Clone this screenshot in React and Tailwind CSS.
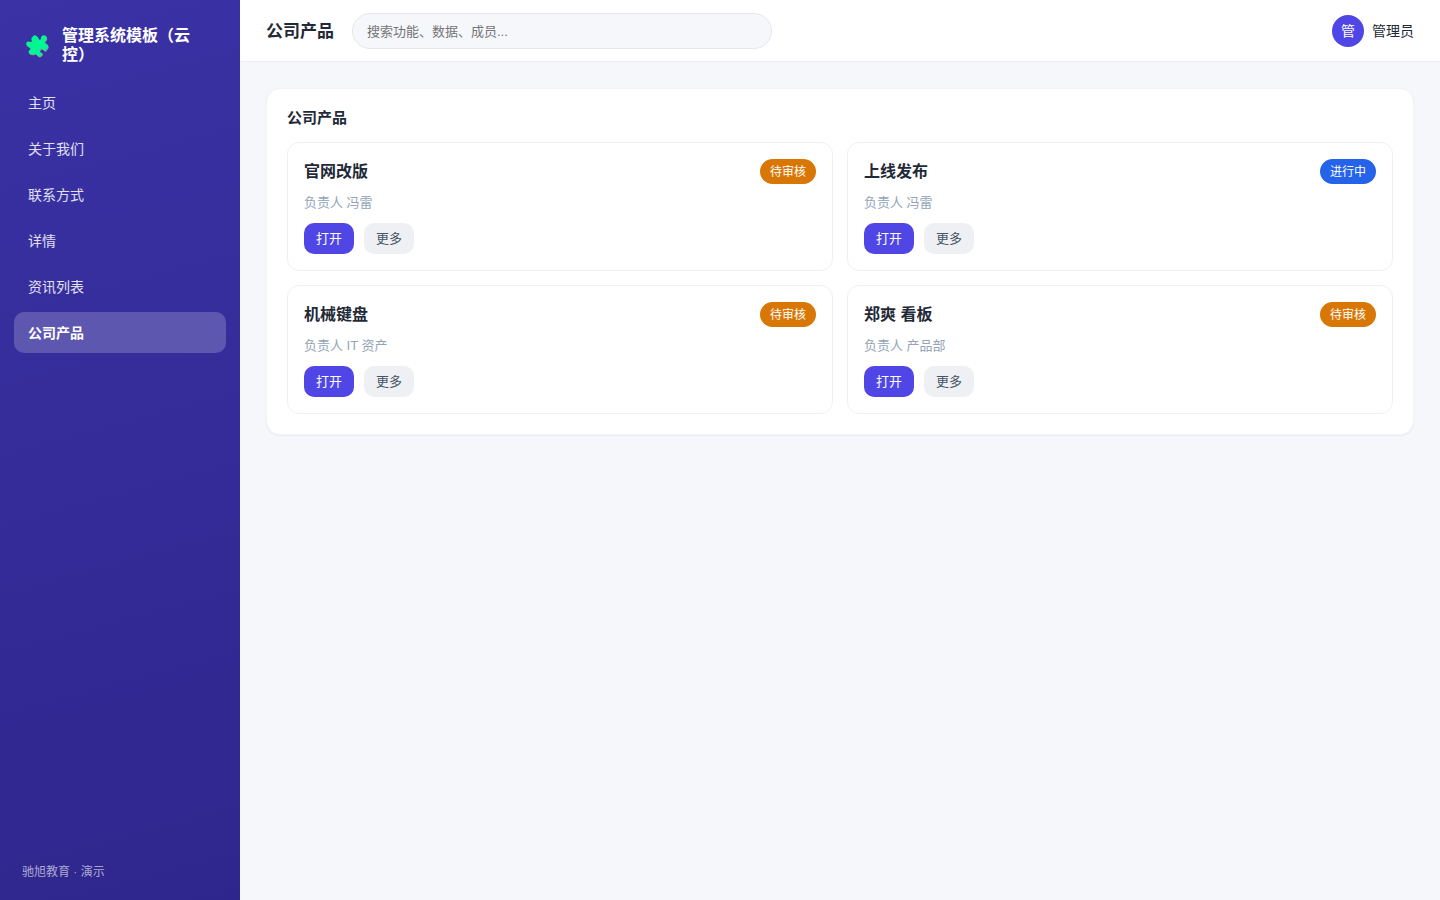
import React from 'react';

const navItems = ['主页', '关于我们', '联系方式', '详情', '资讯列表', '公司产品'];

const products = [
  { name: '官网改版', owner: '负责人 冯雷', status: '待审核' },
  { name: '上线发布', owner: '负责人 冯雷', status: '进行中' },
  { name: '机械键盘', owner: '负责人 IT 资产', status: '待审核' },
  { name: '郑爽 看板', owner: '负责人 产品部', status: '待审核' },
];

const PuzzleShape = ({ fill }) => (
  <path
    fill={fill}
    d="M6.8 3.4Q8.6 1.2 10.6 3L11.8 4.4C12.4 5.2 12.2 6 13 6.6C13.8 7 14.8 6.6 15 5.8C14.6 3.6 16 2.2 17.8 2.2C20 2.2 21.2 4.2 20.4 6.2C20 7.4 18.6 8 18.6 9C18.6 9.8 19.2 10.2 20 10.6L21.4 11.6Q23 13.2 21.6 15L19.4 17.6C18.4 18.6 18 17.6 17.4 16.8C16.4 15.4 14.4 15.6 13.8 17C13.2 18.6 14.2 19.6 15.4 19.8C16.4 20.2 16.6 20.8 16 21.6L14.6 23Q13.2 24.4 11.8 23L9.8 21C8.8 20.2 8.2 21 7.2 21.4L4.8 21.2Q2 20.4 2.8 18L4 16.6C4.8 15.4 4.4 14.6 3.4 14.2C2.4 13.8 1.4 13.4.6 12.2C-.4 10.6 .4 8.8 2 8.6C3.4 8.4 4.4 9.6 5.4 8.8C6.2 8 5.8 7.2 5.4 6.4C5 5.2 6 4.2 6.8 3.4Z"
  />
);

const Logo = () => (
  <svg className="w-6 h-6 shrink-0 overflow-visible" viewBox="0 0 24 24" aria-hidden="true">
    <g transform="translate(0.6 0.8)">
      <PuzzleShape fill="#9a93a0" />
    </g>
    <PuzzleShape fill="#00f593" />
  </svg>
);

const Badge = ({ status }) => {
  const colors = {
    待审核: 'bg-[#d97706]',
    进行中: 'bg-[#2563eb]',
  };
  return (
    <span className={`rounded-full px-2.5 pt-0.5 text-xs leading-[23px] text-white ${colors[status] || 'bg-gray-500'}`}>
      {status}
    </span>
  );
};

const Sidebar = () => (
  <aside className="flex w-60 shrink-0 flex-col bg-linear-165 from-[#3a32a5] to-[#2f268d] px-3.5 pt-[26px] pb-[19px] text-white">
    <div className="flex items-center gap-3 pr-3.5 pl-3">
      <Logo />
      <span className="text-base leading-[19px] font-bold">管理系统模板（云控）</span>
    </div>
    <nav className="mt-[18px] flex flex-col gap-[5px]">
      {navItems.map((item) => (
        <a
          key={item}
          href="#"
          className={`rounded-[10px] px-3.5 pt-[11px] pb-[9px] text-sm leading-[21px] ${
            item === '公司产品' ? 'bg-white/20 font-bold text-white' : 'text-white/85'
          }`}
        >
          {item}
        </a>
      ))}
    </nav>
    <p className="mt-auto px-2 text-xs leading-[18px] text-white/60">驰旭教育 · 演示</p>
  </aside>
);

const Header = () => (
  <header className="flex items-center border-b border-[#eceef2] bg-white px-[26px] pt-[13px] pb-3">
    <h1 className="pt-0.5 text-[17px] leading-6 font-bold">公司产品</h1>
    <input
      type="search"
      aria-label="搜索"
      placeholder="搜索功能、数据、成员..."
      className="ml-[18px] h-9 w-[420px] rounded-full border border-[#e5e7eb] bg-[#f5f7fb] px-3.5 text-[13px] outline-none placeholder:text-[#757575]"
    />
    <div className="ml-auto flex items-center gap-2 text-sm">
      <span className="flex size-8 items-center justify-center rounded-full bg-[#4f46e5] text-white">管</span>
      <span>管理员</span>
    </div>
  </header>
);

const ProductCard = ({ name, owner, status }) => (
  <article className="rounded-xl border border-[#eef0f4] p-4">
    <div className="flex items-center justify-between">
      <h3 className="text-base leading-[25px] font-bold">{name}</h3>
      <Badge status={status} />
    </div>
    <p className="mt-[9px] text-[13px] leading-5 text-[#94a3b8]">{owner}</p>
    <div className="mt-2.5 flex gap-2.5">
      <button type="button" className="h-[31px] rounded-[10px] bg-[#4f46e5] px-3 text-[13px] text-white">
        打开
      </button>
      <button type="button" className="h-[31px] rounded-[10px] bg-[#eef0f4] px-3 text-[13px] text-[#475569]">
        更多
      </button>
    </div>
  </article>
);

export default function App() {
  return (
    <div className="flex min-h-screen bg-[#f5f7fb] font-['Liberation_Sans','Noto_Sans_CJK_SC',sans-serif] text-[#1f2937]">
      <Sidebar />
      <div className="min-w-0 flex-1">
        <Header />
        <main className="p-[26px]">
          <section className="rounded-[14px] border border-[#f1f3f7] bg-white px-5 pt-[18px] pb-5 shadow-xs">
            <h2 className="mb-3.5 text-[15px] leading-[21px] font-bold">公司产品</h2>
            <div className="grid grid-cols-2 gap-3.5">
              {products.map((product) => (
                <ProductCard key={product.name} {...product} />
              ))}
            </div>
          </section>
        </main>
      </div>
    </div>
  );
}
